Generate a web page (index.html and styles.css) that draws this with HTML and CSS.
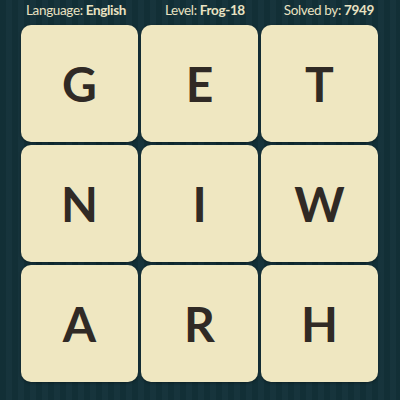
FILE: index.html
```html
<!DOCTYPE html>
<html>
<head>
<meta charset="utf-8">
<link rel="stylesheet" href="styles.css">
</head>
<body>
<div class="page">
  <div class="header">
    <span class="item">Language: <b>English</b></span>
    <span class="item">Level: <b>Frog-18</b></span>
    <span class="item">Solved by: <b>7949</b></span>
  </div>
  <div class="grid">
    <div class="tile">G</div>
    <div class="tile">E</div>
    <div class="tile">T</div>
    <div class="tile">N</div>
    <div class="tile">I</div>
    <div class="tile">W</div>
    <div class="tile">A</div>
    <div class="tile">R</div>
    <div class="tile">H</div>
  </div>
</div>
</body>
</html>
```
FILE: styles.css
```css
html, body {
  margin: 0;
  padding: 0;
}
body {
  width: 400px;
  height: 400px;
  overflow: hidden;
  background-color: #133139;
  background-image: repeating-linear-gradient(90deg, rgba(0,0,0,0.05) 0 6px, rgba(255,255,255,0.015) 6px 12px);
  font-family: Lato, "Open Sans", sans-serif;
}
.page {
  display: flex;
  flex-direction: column;
}
.header {
  height: 25px;
  padding: 0 26px 3px;
  display: flex;
  justify-content: space-between;
  align-items: center;
  color: #e9e2c2;
  font-size: 13.5px;
  letter-spacing: -0.35px;
  line-height: 1;
  box-sizing: border-box;
}
.header b {
  font-weight: 700;
}
.grid {
  margin-left: 21px;
  width: 357px;
  display: grid;
  grid-template-columns: repeat(3, 117px);
  grid-auto-rows: 117px;
  gap: 3px;
}
.tile {
  background: #efe7c1;
  border-radius: 10px;
  box-shadow: 0 1px 3px rgba(0,0,0,0.35);
  display: flex;
  align-items: center;
  justify-content: center;
  color: #302a25;
  font-size: 48px;
  font-weight: 700;
}
```
